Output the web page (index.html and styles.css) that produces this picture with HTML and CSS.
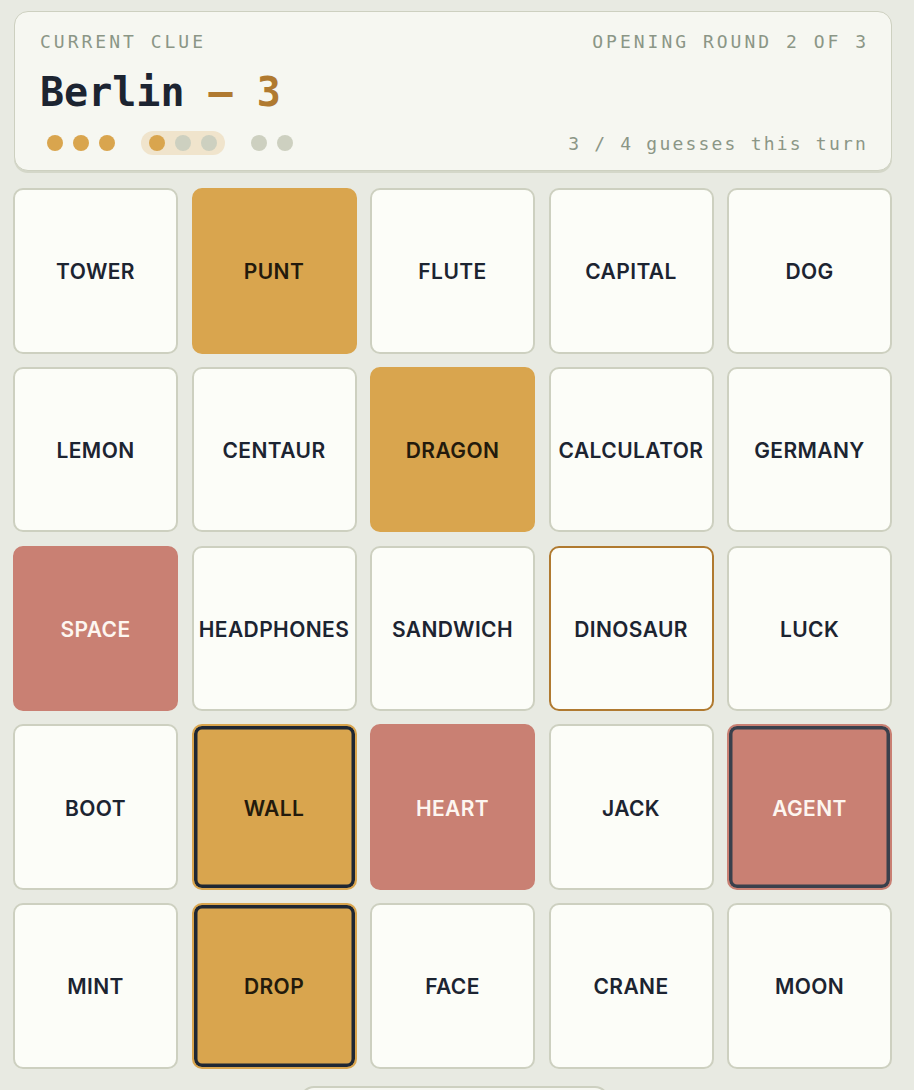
FILE: index.html
```html
<!DOCTYPE html>
<html lang="en">
<head>
<meta charset="utf-8">
<title>Clue board</title>
<link rel="stylesheet" href="styles.css">
</head>
<body>
<main class="page">
  <section class="clue">
    <div class="clue-top">
      <span class="label">CURRENT CLUE</span>
      <span class="label">OPENING ROUND 2 OF 3</span>
    </div>
    <h1 class="clue-word">Berlin <span class="accent">— 3</span></h1>
    <div class="clue-bottom">
      <div class="dots">
        <span class="dot on"></span><span class="dot on"></span><span class="dot on"></span>
        <span class="dot-group"><span class="dot on"></span><span class="dot"></span><span class="dot"></span></span>
        <span class="dot"></span><span class="dot"></span>
      </div>
      <span class="guesses">3 / 4 guesses this turn</span>
    </div>
  </section>
  <section class="board">
    <div class="card">TOWER</div>
    <div class="card gold">PUNT</div>
    <div class="card">FLUTE</div>
    <div class="card">CAPITAL</div>
    <div class="card">DOG</div>
    <div class="card">LEMON</div>
    <div class="card">CENTAUR</div>
    <div class="card gold">DRAGON</div>
    <div class="card">CALCULATOR</div>
    <div class="card">GERMANY</div>
    <div class="card red">SPACE</div>
    <div class="card">HEADPHONES</div>
    <div class="card">SANDWICH</div>
    <div class="card marked">DINOSAUR</div>
    <div class="card">LUCK</div>
    <div class="card">BOOT</div>
    <div class="card gold picked">WALL</div>
    <div class="card red">HEART</div>
    <div class="card">JACK</div>
    <div class="card red picked">AGENT</div>
    <div class="card">MINT</div>
    <div class="card gold picked">DROP</div>
    <div class="card">FACE</div>
    <div class="card">CRANE</div>
    <div class="card">MOON</div>
  </section>
  <div class="footer"><div class="end-btn"></div></div>
</main>
</body>
</html>
```
FILE: styles.css
```css
html, body {
  margin: 0;
  padding: 0;
  background: #e8eae2;
}
body {
  font-family: Inter, "Noto Sans", sans-serif;
  color: #1c2431;
}
.page {
  padding: 11px 0 0 13px;
  width: 880px;
}
.clue {
  margin-left: 1px;
  width: 878px;
  box-sizing: border-box;
  background: #f6f7f1;
  border: 1px solid #cdd0c0;
  border-radius: 14px;
  box-shadow: 0 2px 0 #d4d7c9;
  padding: 18px 25px 0 25px;
  height: 160px;
}
.clue-top {
  display: flex;
  justify-content: space-between;
}
.label {
  font-family: "DejaVu Sans Mono", "Liberation Mono", monospace;
  font-size: 18px;
  letter-spacing: 3px;
  margin-right: -3px;
  color: #8b9686;
  line-height: 24px;
}
.clue-word {
  margin: 14px 0 0 0;
  font-family: "DejaVu Sans Mono", "Liberation Mono", monospace;
  font-weight: bold;
  font-size: 40px;
  line-height: 48px;
  color: #1c2431;
}
.accent { color: #b07a30; }
.clue-bottom {
  margin-top: 15px;
  display: flex;
  justify-content: space-between;
  align-items: center;
}
.dots {
  display: flex;
  align-items: center;
  gap: 10px;
  padding-left: 7px;
}
.dot {
  width: 16px;
  height: 16px;
  border-radius: 50%;
  background: #cdd0c0;
  display: block;
}
.dot.on { background: #d9a54e; }
.dot-group {
  display: flex;
  gap: 10px;
  background: #f0e4cc;
  border-radius: 12px;
  padding: 4px 8px;
  margin: 0 16px 0 16px;
}
.guesses {
  font-family: "DejaVu Sans Mono", "Liberation Mono", monospace;
  font-size: 18px;
  letter-spacing: 2.2px;
  margin-right: -2px;
  color: #8b9686;
}
.board {
  margin-top: 17px;
  display: grid;
  grid-template-columns: repeat(5, 165px);
  grid-auto-rows: 165.5px;
  gap: 13.3px 13.5px;
}
.card {
  box-sizing: border-box;
  display: flex;
  align-items: center;
  justify-content: center;
  background: #fcfdf8;
  border: 2px solid #cdd0c0;
  border-radius: 10px;
  font-size: 21px;
  font-weight: 600;
  color: #1c2431;
  letter-spacing: 0.4px;
  padding-top: 2px;
}
.card.gold {
  background: #d9a54e;
  border-color: #d9a54e;
  color: #231a0c;
}
.card.red {
  background: #c98073;
  border-color: #c98073;
  color: #fdf6f0;
}
.card.marked {
  border-color: #b07a30;
}
.card.picked {
  box-shadow: inset 0 0 0 3.5px #1f2733;
}
.card.red.picked {
  box-shadow: inset 0 0 0 3.5px #3a404c;
}
.footer {
  display: flex;
  justify-content: center;
  margin-top: 17px;
  padding-left: 2px;
}
.end-btn {
  width: 309px;
  height: 44px;
  box-sizing: border-box;
  background: #f6f7f1;
  border: 2px solid #cdd0c0;
  border-radius: 14px;
}
```
